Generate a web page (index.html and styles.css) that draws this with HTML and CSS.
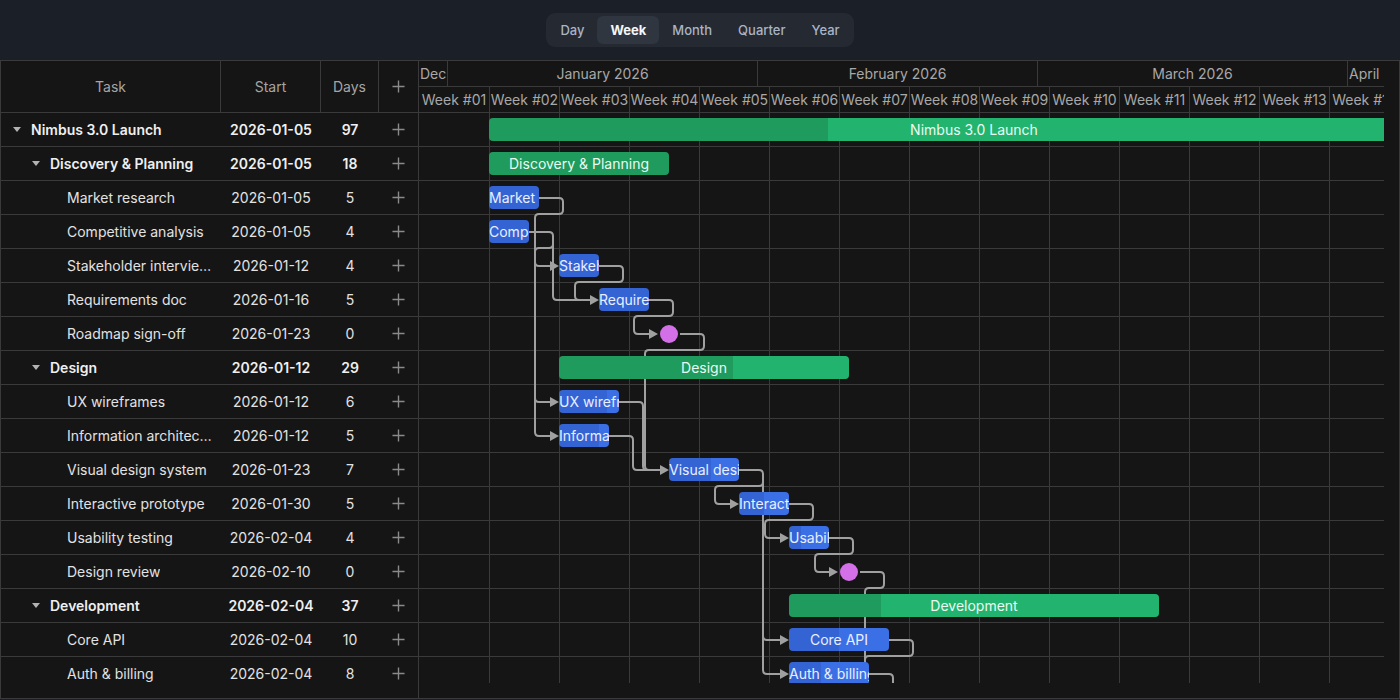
FILE: index.html
```html
<!DOCTYPE html>
<html lang="en">
<head>
<meta charset="utf-8">
<title>Gantt</title>
<link rel="stylesheet" href="styles.css">
</head>
<body>
<div class="toolbar">
  <div class="seg">
    <button class="seg-btn">Day</button>
    <button class="seg-btn active">Week</button>
    <button class="seg-btn">Month</button>
    <button class="seg-btn">Quarter</button>
    <button class="seg-btn">Year</button>
  </div>
</div>

<div class="gantt">
  <div class="grid">
    <div class="grid-head">
      <div class="hcell col-task">Task</div>
      <div class="hcell col-start">Start</div>
      <div class="hcell col-days">Days</div>
      <div class="hcell col-add"><svg class="plus head-plus" viewBox="0 0 14 14"><path d="M7 0.5V13.5M0.5 7H13.5"/></svg></div>
    </div>
    <div class="grid-body">
      <div class="row summary lvl0"><div class="cell col-task"><span class="toggle"></span><span class="name">Nimbus 3.0 Launch</span></div><div class="cell col-start">2026-01-05</div><div class="cell col-days">97</div><div class="cell col-add"><svg class="plus" viewBox="0 0 14 14"><path d="M7 0.5V13.5M0.5 7H13.5"/></svg></div></div>
      <div class="row summary lvl1"><div class="cell col-task"><span class="toggle"></span><span class="name">Discovery &amp; Planning</span></div><div class="cell col-start">2026-01-05</div><div class="cell col-days">18</div><div class="cell col-add"><svg class="plus" viewBox="0 0 14 14"><path d="M7 0.5V13.5M0.5 7H13.5"/></svg></div></div>
      <div class="row lvl2"><div class="cell col-task"><span class="spacer"></span><span class="name">Market research</span></div><div class="cell col-start">2026-01-05</div><div class="cell col-days">5</div><div class="cell col-add"><svg class="plus" viewBox="0 0 14 14"><path d="M7 0.5V13.5M0.5 7H13.5"/></svg></div></div>
      <div class="row lvl2"><div class="cell col-task"><span class="spacer"></span><span class="name">Competitive analysis</span></div><div class="cell col-start">2026-01-05</div><div class="cell col-days">4</div><div class="cell col-add"><svg class="plus" viewBox="0 0 14 14"><path d="M7 0.5V13.5M0.5 7H13.5"/></svg></div></div>
      <div class="row lvl2"><div class="cell col-task"><span class="spacer"></span><span class="name">Stakeholder interviews</span></div><div class="cell col-start">2026-01-12</div><div class="cell col-days">4</div><div class="cell col-add"><svg class="plus" viewBox="0 0 14 14"><path d="M7 0.5V13.5M0.5 7H13.5"/></svg></div></div>
      <div class="row lvl2"><div class="cell col-task"><span class="spacer"></span><span class="name">Requirements doc</span></div><div class="cell col-start">2026-01-16</div><div class="cell col-days">5</div><div class="cell col-add"><svg class="plus" viewBox="0 0 14 14"><path d="M7 0.5V13.5M0.5 7H13.5"/></svg></div></div>
      <div class="row lvl2"><div class="cell col-task"><span class="spacer"></span><span class="name">Roadmap sign-off</span></div><div class="cell col-start">2026-01-23</div><div class="cell col-days">0</div><div class="cell col-add"><svg class="plus" viewBox="0 0 14 14"><path d="M7 0.5V13.5M0.5 7H13.5"/></svg></div></div>
      <div class="row summary lvl1"><div class="cell col-task"><span class="toggle"></span><span class="name">Design</span></div><div class="cell col-start">2026-01-12</div><div class="cell col-days">29</div><div class="cell col-add"><svg class="plus" viewBox="0 0 14 14"><path d="M7 0.5V13.5M0.5 7H13.5"/></svg></div></div>
      <div class="row lvl2"><div class="cell col-task"><span class="spacer"></span><span class="name">UX wireframes</span></div><div class="cell col-start">2026-01-12</div><div class="cell col-days">6</div><div class="cell col-add"><svg class="plus" viewBox="0 0 14 14"><path d="M7 0.5V13.5M0.5 7H13.5"/></svg></div></div>
      <div class="row lvl2"><div class="cell col-task"><span class="spacer"></span><span class="name">Information architecture</span></div><div class="cell col-start">2026-01-12</div><div class="cell col-days">5</div><div class="cell col-add"><svg class="plus" viewBox="0 0 14 14"><path d="M7 0.5V13.5M0.5 7H13.5"/></svg></div></div>
      <div class="row lvl2"><div class="cell col-task"><span class="spacer"></span><span class="name">Visual design system</span></div><div class="cell col-start">2026-01-23</div><div class="cell col-days">7</div><div class="cell col-add"><svg class="plus" viewBox="0 0 14 14"><path d="M7 0.5V13.5M0.5 7H13.5"/></svg></div></div>
      <div class="row lvl2"><div class="cell col-task"><span class="spacer"></span><span class="name">Interactive prototype</span></div><div class="cell col-start">2026-01-30</div><div class="cell col-days">5</div><div class="cell col-add"><svg class="plus" viewBox="0 0 14 14"><path d="M7 0.5V13.5M0.5 7H13.5"/></svg></div></div>
      <div class="row lvl2"><div class="cell col-task"><span class="spacer"></span><span class="name">Usability testing</span></div><div class="cell col-start">2026-02-04</div><div class="cell col-days">4</div><div class="cell col-add"><svg class="plus" viewBox="0 0 14 14"><path d="M7 0.5V13.5M0.5 7H13.5"/></svg></div></div>
      <div class="row lvl2"><div class="cell col-task"><span class="spacer"></span><span class="name">Design review</span></div><div class="cell col-start">2026-02-10</div><div class="cell col-days">0</div><div class="cell col-add"><svg class="plus" viewBox="0 0 14 14"><path d="M7 0.5V13.5M0.5 7H13.5"/></svg></div></div>
      <div class="row summary lvl1"><div class="cell col-task"><span class="toggle"></span><span class="name">Development</span></div><div class="cell col-start">2026-02-04</div><div class="cell col-days">37</div><div class="cell col-add"><svg class="plus" viewBox="0 0 14 14"><path d="M7 0.5V13.5M0.5 7H13.5"/></svg></div></div>
      <div class="row lvl2"><div class="cell col-task"><span class="spacer"></span><span class="name">Core API</span></div><div class="cell col-start">2026-02-04</div><div class="cell col-days">10</div><div class="cell col-add"><svg class="plus" viewBox="0 0 14 14"><path d="M7 0.5V13.5M0.5 7H13.5"/></svg></div></div>
      <div class="row lvl2"><div class="cell col-task"><span class="spacer"></span><span class="name">Auth &amp; billing</span></div><div class="cell col-start">2026-02-04</div><div class="cell col-days">8</div><div class="cell col-add"><svg class="plus" viewBox="0 0 14 14"><path d="M7 0.5V13.5M0.5 7H13.5"/></svg></div></div>
    </div>
    <div class="hscroll"></div>
  </div>

  <div class="chart">
    <div class="chart-main">
      <div class="scale">
        <div class="scale-row months">
          <div class="scale-cell" style="width:28px">Dec 2025</div>
          <div class="scale-cell" style="width:310px">January 2026</div>
          <div class="scale-cell" style="width:280px">February 2026</div>
          <div class="scale-cell" style="width:310px">March 2026</div>
          <div class="scale-cell" style="width:52px">April 2026</div>
        </div>
        <div class="scale-row weeks">
          <div class="scale-cell week">Week #01</div>
          <div class="scale-cell week">Week #02</div>
          <div class="scale-cell week">Week #03</div>
          <div class="scale-cell week">Week #04</div>
          <div class="scale-cell week">Week #05</div>
          <div class="scale-cell week">Week #06</div>
          <div class="scale-cell week">Week #07</div>
          <div class="scale-cell week">Week #08</div>
          <div class="scale-cell week">Week #09</div>
          <div class="scale-cell week">Week #10</div>
          <div class="scale-cell week">Week #11</div>
          <div class="scale-cell week">Week #12</div>
          <div class="scale-cell week">Week #13</div>
          <div class="scale-cell week">Week #14</div>
        </div>
      </div>
      <div class="chart-body">
        <svg class="links" width="965" height="570" viewBox="419 113 965 570">
          <g class="link-lines">
            <path d="M539 198H559Q563 198 563 202V210Q563 214 559 214H539Q535 214 535 218V262Q535 266 539 266H551"/>
            <path d="M535 218V398Q535 402 539 402H551"/>
            <path d="M535 398V432Q535 436 539 436H551"/>
            <path d="M529 232H549Q553 232 553 236V244Q553 248 549 248H539Q535 248 535 252"/>
            <path d="M553 236V296Q553 300 557 300H591"/>
            <path d="M599 266H619Q623 266 623 270V278Q623 282 619 282H579Q575 282 575 286V296Q575 300 579 300H591"/>
            <path d="M649 300H669Q673 300 673 304V312Q673 316 669 316H638Q634 316 634 320V330Q634 334 638 334H650"/>
            <path d="M680 334H700Q704 334 704 338V346Q704 350 700 350H649Q645 350 645 354V466Q645 470 649 470H661"/>
            <path d="M619 402H639Q643 402 643 406V466Q643 470 647 470"/>
            <path d="M609 436H629Q633 436 633 440V466Q633 470 637 470H661"/>
            <path d="M739 470H759Q763 470 763 474V482Q763 486 759 486H719Q715 486 715 490V500Q715 504 719 504H731"/>
            <path d="M763 482V636Q763 640 767 640H781"/>
            <path d="M763 636V670Q763 674 767 674H781"/>
            <path d="M789 504H809Q813 504 813 508V516Q813 520 809 520H769Q765 520 765 524V534Q765 538 769 538H781"/>
            <path d="M829 538H849Q853 538 853 542V550Q853 554 849 554H819Q815 554 815 558V568Q815 572 819 572H830"/>
            <path d="M860 572H880Q884 572 884 576V584Q884 588 880 588H869Q865 588 865 592V700"/>
            <path d="M889 640H909Q913 640 913 644V652Q913 656 909 656H869Q865 656 865 660V700"/>
            <path d="M869 674H889Q893 674 893 678V700"/>
          </g>
          <g class="link-arrows">
            <polygon points="559,266 550,261 550,271"/>
            <polygon points="559,402 550,397 550,407"/>
            <polygon points="559,436 550,431 550,441"/>
            <polygon points="599,300 590,295 590,305"/>
            <polygon points="658,334 649,329 649,339"/>
            <polygon points="669,470 660,465 660,475"/>
            <polygon points="739,504 730,499 730,509"/>
            <polygon points="789,538 780,533 780,543"/>
            <polygon points="838,572 829,567 829,577"/>
            <polygon points="789,640 780,635 780,645"/>
            <polygon points="789,674 780,669 780,679"/>
          </g>
        </svg>
        <div class="crow"><div class="bar project" style="left:70px;width:970px;--p:35%">Nimbus 3.0 Launch</div></div>
        <div class="crow"><div class="bar project" style="left:70px;width:180px;--p:100%">Discovery &amp; Planning</div></div>
        <div class="crow"><div class="bar task" style="left:70px;width:50px;--p:100%">Market research</div></div>
        <div class="crow"><div class="bar task" style="left:70px;width:40px;--p:100%">Competitive analysis</div></div>
        <div class="crow"><div class="bar task" style="left:140px;width:40px;--p:100%">Stakeholder interviews</div></div>
        <div class="crow"><div class="bar task" style="left:180px;width:50px;--p:100%">Requirements doc</div></div>
        <div class="crow"><div class="milestone" style="left:250px"></div></div>
        <div class="crow"><div class="bar project" style="left:140px;width:290px;--p:60%">Design</div></div>
        <div class="crow"><div class="bar task" style="left:140px;width:60px;--p:80%">UX wireframes</div></div>
        <div class="crow"><div class="bar task" style="left:140px;width:50px;--p:80%">Information architecture</div></div>
        <div class="crow"><div class="bar task" style="left:250px;width:70px;--p:60%">Visual design system</div></div>
        <div class="crow"><div class="bar task" style="left:320px;width:50px;--p:50%">Interactive prototype</div></div>
        <div class="crow"><div class="bar task" style="left:370px;width:40px;--p:30%">Usability testing</div></div>
        <div class="crow"><div class="milestone" style="left:430px"></div></div>
        <div class="crow"><div class="bar project" style="left:370px;width:370px;--p:25%">Development</div></div>
        <div class="crow"><div class="bar task" style="left:370px;width:100px;--p:50%">Core API</div></div>
        <div class="crow"><div class="bar task" style="left:370px;width:80px;--p:40%">Auth &amp; billing</div></div>
      </div>
      <div class="hscroll"></div>
    </div>
    <div class="vscroll"></div>
  </div>
</div>
</body>
</html>
```

FILE: styles.css
```css
* {
  box-sizing: border-box;
}

html,
body {
  margin: 0;
  height: 100%;
}

body {
  background: #1b1f27;
  font-family: Inter, "Noto Sans", "DejaVu Sans", sans-serif;
  font-size: 14px;
  color: #e4e4e4;
  overflow: hidden;
}

/* ---------- toolbar ---------- */
.toolbar {
  height: 60px;
  display: flex;
  align-items: center;
  justify-content: center;
}

.seg {
  display: flex;
  padding: 3px 1px;
  background: #242932;
  border-radius: 9px;
}

.seg-btn {
  height: 28px;
  padding: 0 13px;
  border: 0;
  background: transparent;
  color: #a9b4c5;
  font-family: Inter, "Noto Sans", sans-serif;
  font-size: 13px;
  font-weight: 500;
  border-radius: 6px;
}

.seg-btn.active {
  background: #30363f;
  color: #f4f6fa;
  font-weight: 700;
}

/* ---------- gantt frame ---------- */
.gantt {
  height: 639px;
  border: 1px solid #3a3a3a;
  background: #151515;
  display: flex;
}

/* ---------- grid (table) ---------- */
.grid {
  width: 418px;
  flex: none;
  border-right: 1px solid #3a3a3a;
  display: flex;
  flex-direction: column;
}

.grid-head {
  height: 52px;
  flex: none;
  display: flex;
  border-bottom: 1px solid #3a3a3a;
  color: #a5a5a5;
}

.hcell {
  display: flex;
  align-items: center;
  justify-content: center;
  border-right: 1px solid #3a3a3a;
}

.hcell.col-add {
  border-right: 0;
}

.col-task {
  width: 220px;
}

.col-start {
  width: 100px;
}

.col-days {
  width: 58px;
}

.col-add {
  width: 39px;
}

.grid-body {
  height: 570px;
  flex: none;
  overflow: hidden;
}

.hscroll {
  height: 15px;
  flex: none;
}

.row {
  height: 34px;
  border-bottom: 1px solid #3a3a3a;
  display: flex;
  align-items: center;
  color: #e2e2e2;
}

.row.summary {
  font-weight: 600;
  color: #efefef;
}

.cell {
  display: flex;
  align-items: center;
  justify-content: center;
  white-space: nowrap;
}

.cell.col-task {
  justify-content: flex-start;
  padding-left: 12px;
  padding-right: 8px;
  min-width: 0;
}

.lvl1 .cell.col-task {
  padding-left: 31px;
}

.lvl2 .cell.col-task {
  padding-left: 48px;
}

.toggle,
.spacer {
  width: 18px;
  flex: none;
  display: flex;
  align-items: center;
}

.toggle::before {
  content: "";
  border-left: 4px solid transparent;
  border-right: 4px solid transparent;
  border-top: 5px solid #b3b3b3;
}

.name {
  overflow: hidden;
  text-overflow: ellipsis;
  white-space: nowrap;
  min-width: 0;
}

.plus {
  width: 13px;
  height: 13px;
  fill: none;
  stroke: #8a8a8a;
  stroke-width: 1.5;
}

.head-plus {
  width: 13px;
  height: 13px;
}

/* ---------- chart ---------- */
.chart {
  flex: 1;
  min-width: 0;
  display: flex;
}

.chart-main {
  width: 965px;
  flex: none;
  display: flex;
  flex-direction: column;
  overflow: hidden;
}

.vscroll {
  flex: 1;
}

.scale {
  height: 52px;
  flex: none;
  border-bottom: 1px solid #3a3a3a;
  color: #a8a8a8;
}

.scale-row {
  display: flex;
}

.scale-row.months {
  height: 26px;
  border-bottom: 1px solid #3a3a3a;
}

.scale-row.weeks {
  height: 25px;
}

.scale-cell {
  flex: none;
  height: 100%;
  line-height: 25px;
  text-align: center;
  white-space: nowrap;
  overflow: hidden;
  padding: 0 1px;
  border-left: 1px solid #3a3a3a;
}

.scale-cell:first-child {
  border-left: 0;
}

.scale-cell.week {
  width: 70px;
  padding: 0;
}

.chart-body {
  height: 570px;
  flex: none;
  position: relative;
  z-index: 0;
  overflow: hidden;
  background:
    linear-gradient(#151515, #151515) 0 0 / 1px 100% no-repeat,
    repeating-linear-gradient(to right, #3a3a3a 0 1px, transparent 1px 70px);
}

.links {
  position: absolute;
  left: 0;
  top: 0;
  z-index: 1;
}

.link-lines path {
  fill: none;
  stroke: #a0a0a0;
  stroke-width: 2;
}

.link-arrows polygon {
  fill: #a0a0a0;
}

.crow {
  height: 34px;
  border-bottom: 1px solid #3a3a3a;
  position: relative;
}

.bar {
  position: absolute;
  top: 5px;
  height: 23px;
  z-index: 2;
  border-radius: 4px;
  line-height: 24px;
  text-align: center;
  white-space: nowrap;
  overflow: hidden;
  font-size: 14px;
  background: linear-gradient(to right, var(--done) var(--p), var(--base) var(--p));
}

.bar.task {
  --done: #3463d4;
  --base: #3b6fe6;
  color: #e9efff;
}

.bar.project {
  --done: #1f9b5e;
  --base: #22b46f;
  color: #eafaf1;
}

.milestone {
  position: absolute;
  top: 8px;
  width: 18px;
  height: 18px;
  margin-left: -9px;
  z-index: 2;
  border-radius: 50%;
  background: #d36fe7;
}
```
